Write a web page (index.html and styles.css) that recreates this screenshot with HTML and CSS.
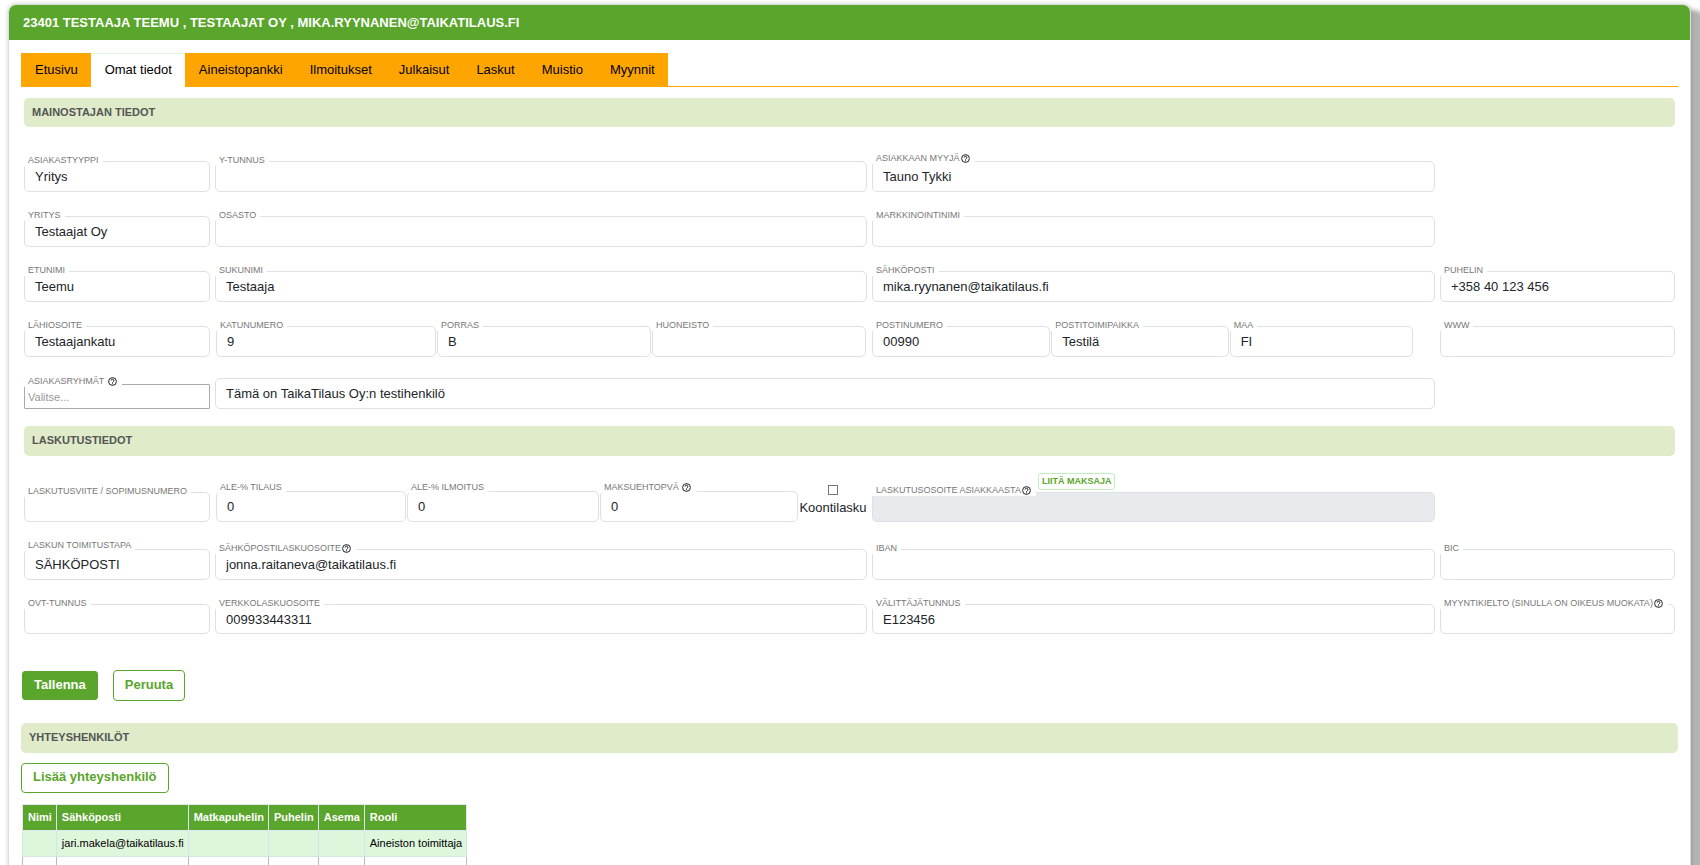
FILE: index.html
```html
<!DOCTYPE html>
<html lang="fi">
<head>
<meta charset="utf-8">
<title>Asiakkaan tiedot</title>
<link rel="stylesheet" href="styles.css">
</head>
<body>
<svg class="sprite" aria-hidden="true">
  <symbol id="help" viewBox="0 0 9 9">
    <circle cx="4.5" cy="4.5" r="3.9" fill="none" stroke="#222" stroke-width="1"/>
    <path d="M3.1 3.6a1.4 1.4 0 1 1 2.1 1.2q-.7.4-.7 1" fill="none" stroke="#222" stroke-width="1"/>
    <rect x="4" y="6.3" width="1" height="1" fill="#222"/>
  </symbol>
</svg>
<main class="panel">
  <h1 class="panel-title">23401 TESTAAJA TEEMU , TESTAAJAT OY , MIKA.RYYNANEN@TAIKATILAUS.FI</h1>
  <div class="panel-body">
    <nav class="tabs">
      <a class="tab" href="#">Etusivu</a>
      <a class="tab tab--active" href="#">Omat tiedot</a>
      <a class="tab" href="#">Aineistopankki</a>
      <a class="tab" href="#">Ilmoitukset</a>
      <a class="tab" href="#">Julkaisut</a>
      <a class="tab" href="#">Laskut</a>
      <a class="tab" href="#">Muistio</a>
      <a class="tab" href="#">Myynnit</a>
    </nav>

    <form class="form">
      <h2 class="section-title">MAINOSTAJAN TIEDOT</h2>
      <div class="rows">
        <div class="row">
          <div class="field"><select class="control" id="tyyppi"><option>Yritys</option></select><label class="label" for="tyyppi">ASIAKASTYYPPI</label></div>
          <div class="field"><input class="control" id="ytunnus"><label class="label" for="ytunnus">Y-TUNNUS</label></div>
          <div class="field"><input class="control" id="myyja" value="Tauno Tykki"><label class="label label--help" for="myyja">ASIAKKAAN MYYJÄ<svg class="help"><use href="#help"/></svg></label></div>
        </div>
        <div class="row">
          <div class="field"><input class="control" id="yritys" value="Testaajat Oy"><label class="label" for="yritys">YRITYS</label></div>
          <div class="field"><input class="control" id="osasto"><label class="label" for="osasto">OSASTO</label></div>
          <div class="field"><input class="control" id="mnimi"><label class="label" for="mnimi">MARKKINOINTINIMI</label></div>
        </div>
        <div class="row">
          <div class="field"><input class="control" id="etunimi" value="Teemu"><label class="label" for="etunimi">ETUNIMI</label></div>
          <div class="field"><input class="control" id="sukunimi" value="Testaaja"><label class="label" for="sukunimi">SUKUNIMI</label></div>
          <div class="field"><input class="control" id="email" value="mika.ryynanen@taikatilaus.fi"><label class="label" for="email">SÄHKÖPOSTI</label></div>
          <div class="field"><input class="control" id="puhelin" value="+358 40 123 456"><label class="label" for="puhelin">PUHELIN</label></div>
        </div>
        <div class="row">
          <div class="field"><input class="control" id="osoite" value="Testaajankatu"><label class="label" for="osoite">LÄHIOSOITE</label></div>
          <div class="subrow subrow--street">
            <div class="field"><input class="control" id="katunro" value="9"><label class="label" for="katunro">KATUNUMERO</label></div>
            <div class="field"><input class="control" id="porras" value="B"><label class="label" for="porras">PORRAS</label></div>
            <div class="field"><input class="control" id="huoneisto"><label class="label" for="huoneisto">HUONEISTO</label></div>
          </div>
          <div class="subrow subrow--post">
            <div class="field"><input class="control" id="postinro" value="00990"><label class="label" for="postinro">POSTINUMERO</label></div>
            <div class="field"><input class="control" id="ptp" value="Testilä"><label class="label" for="ptp">POSTITOIMIPAIKKA</label></div>
            <div class="field"><input class="control" id="maa" value="FI"><label class="label" for="maa">MAA</label></div>
          </div>
          <div class="field"><input class="control" id="www"><label class="label" for="www">WWW</label></div>
        </div>
        <div class="row row--note">
          <div class="field"><input class="control control--group" id="ryhmat" placeholder="Valitse..."><label class="label label--help" for="ryhmat">ASIAKASRYHMÄT <svg class="help"><use href="#help"/></svg></label></div>
          <div class="field field--wide"><input class="control" aria-label="Lisätiedot" value="Tämä on TaikaTilaus Oy:n testihenkilö"></div>
        </div>
      </div>

      <h2 class="section-title section-title--next">LASKUTUSTIEDOT</h2>
      <div class="rows rows--billing">
        <div class="row">
          <div class="field"><input class="control control--short" id="viite"><label class="label" for="viite">LASKUTUSVIITE / SOPIMUSNUMERO</label></div>
          <div class="subrow subrow--terms">
            <div class="field"><input class="control" id="aletilaus" value="0"><label class="label label--high" for="aletilaus">ALE-% TILAUS</label></div>
            <div class="field"><input class="control" id="aleilm" value="0"><label class="label label--high" for="aleilm">ALE-% ILMOITUS</label></div>
            <div class="field"><input class="control" id="maksuehto" value="0"><label class="label label--high" for="maksuehto">MAKSUEHTOPVÄ <svg class="help"><use href="#help"/></svg></label></div>
            <div class="check"><input class="checkbox" type="checkbox" id="koonti"><label for="koonti">Koontilasku</label></div>
          </div>
          <div class="field"><input class="control control--short" id="laskuosoite" disabled><div class="label-line"><label class="label-inline" for="laskuosoite">LASKUTUSOSOITE ASIAKKAASTA<svg class="help"><use href="#help"/></svg></label><button class="mini-button" type="button">LIITÄ MAKSAJA</button></div></div>
        </div>
        <div class="row">
          <div class="field"><select class="control" id="tapa"><option>SÄHKÖPOSTI</option></select><label class="label label--high" for="tapa">LASKUN TOIMITUSTAPA</label></div>
          <div class="field"><input class="control" id="slasku" value="jonna.raitaneva@taikatilaus.fi"><label class="label" for="slasku">SÄHKÖPOSTILASKUOSOITE<svg class="help"><use href="#help"/></svg></label></div>
          <div class="field"><input class="control" id="iban"><label class="label" for="iban">IBAN</label></div>
          <div class="field"><input class="control" id="bic"><label class="label" for="bic">BIC</label></div>
        </div>
        <div class="row row--last">
          <div class="field"><input class="control control--short" id="ovt"><label class="label" for="ovt">OVT-TUNNUS</label></div>
          <div class="field"><input class="control control--short" id="verkko" value="009933443311"><label class="label" for="verkko">VERKKOLASKUOSOITE</label></div>
          <div class="field"><input class="control control--short" id="valittaja" value="E123456"><label class="label" for="valittaja">VÄLITTÄJÄTUNNUS</label></div>
          <div class="field"><input class="control control--short" id="kielto"><label class="label" for="kielto">MYYNTIKIELTO (SINULLA ON OIKEUS MUOKATA)<svg class="help"><use href="#help"/></svg></label></div>
        </div>
      </div>
    </form>

    <div class="actions">
      <button class="button button--primary" type="button">Tallenna</button>
      <button class="button" type="button">Peruuta</button>
    </div>

    <section>
      <h2 class="section-title section-title--contacts">YHTEYSHENKILÖT</h2>
      <button class="button button--add" type="button">Lisää yhteyshenkilö</button>
      <table class="contacts">
        <thead><tr><th>Nimi</th><th>Sähköposti</th><th>Matkapuhelin</th><th>Puhelin</th><th>Asema</th><th>Rooli</th></tr></thead>
        <tbody>
          <tr class="filled"><td></td><td>jari.makela@taikatilaus.fi</td><td></td><td></td><td></td><td>Aineiston toimittaja</td></tr>
          <tr><td></td><td></td><td></td><td></td><td></td><td></td></tr>
        </tbody>
      </table>
    </section>
  </div>
</main>
</body>
</html>
```
FILE: styles.css
```css
* { box-sizing: border-box; }

body {
  margin: 0;
  height: 100vh;
  overflow: hidden;
  background: #fff;
  color: #212529;
  font: 13px/18px "Liberation Sans", Arial, sans-serif;
}

.sprite { position: absolute; width: 0; height: 0; }

.panel {
  margin: 4px 9px 0 8px;
  min-height: 100vh;
  border: 1px solid #ddd;
  border-radius: 8px;
  background: #fff;
  box-shadow: 0 0 4px rgba(0, 0, 0, .2), 12px 6px 4px #b2b2b2;
}

.panel-title {
  margin: 0;
  padding: 9px 14px 8px;
  border-radius: 7px 7px 0 0;
  background: #5aa52b;
  color: #fff;
  font-size: 13px;
  line-height: 18px;
}

.panel-body { padding: 13px 12px; }

.tabs {
  display: flex;
  border-bottom: 1px solid #ffa500;
}

.tab {
  padding: 7px 13px 8px 14px;
  border-top: 1px solid #ffa500;
  background: #ffa500;
  color: #000;
  line-height: 17px;
  text-decoration: none;
}

.tab--active {
  margin-bottom: -1px;
  border-top-color: #dff5df;
  background: #fff;
}

.form { padding: 11px 3px 0; }

.section-title {
  margin: 0;
  padding: 6px 8px;
  border-radius: 5px;
  background: #dfebc9;
  color: #555;
  font-size: 11px;
  line-height: 17px;
}

.section-title--next {
  margin-top: 17px;
  padding-bottom: 7px;
}

.section-title--contacts { padding-bottom: 7px; }

.rows {
  display: flex;
  flex-direction: column;
  gap: 24px;
  padding-top: 34px;
}

.rows--billing {
  gap: 27px;
  padding-top: 35px;
}

.row {
  display: grid;
  grid-template-columns: 186fr 652fr 563fr 235fr;
  gap: 5px;
  align-items: end;
}

.row--note,
.row--last { margin-top: -3px; }

.subrow { display: grid; }

.subrow--street {
  grid-template-columns: 220fr 214fr 214fr;
  gap: 1px;
  padding: 0 1px;
}

.subrow--post {
  grid-template-columns: 178fr 177fr 183fr;
  gap: 1px;
  padding-right: 22px;
}

.subrow--terms {
  grid-template-columns: 190fr 192fr 198fr 68px;
  gap: 1px;
  padding-left: 1px;
}

.field {
  position: relative;
  min-width: 0;
}

.field--wide { grid-column: span 2; }

.control {
  display: block;
  width: 100%;
  height: 31px;
  padding: 0 10px;
  border: 1px solid #dee0e6;
  border-radius: 5px;
  background: #fff;
  color: #212529;
  font: inherit;
  appearance: none;
}

.control--short { height: 30px; }

.control:disabled { background: #e8ebee; }

.control--group {
  height: 25px;
  padding: 0 3px;
  border-color: #aaa;
  border-radius: 1px;
  font-size: 11px;
}

.control--group::placeholder { color: #999; }

.label {
  position: absolute;
  left: 0;
  top: -7px;
  padding: 0 4px;
  background: #fff;
  color: #777;
  font-size: 9px;
  line-height: 12px;
  white-space: nowrap;
}

.label--help { top: -9px; }
.label--high { top: -10px; }

.help {
  width: 9px;
  height: 9px;
  margin: 0 1px;
  vertical-align: -2px;
}

.label-line {
  position: absolute;
  left: 0;
  bottom: 26px;
  display: flex;
  align-items: flex-end;
  gap: 2px;
}

.label-inline {
  padding: 0 4px;
  background: #fff;
  color: #777;
  font-size: 9px;
  line-height: 12px;
  white-space: nowrap;
}

.mini-button {
  height: 17px;
  margin-bottom: 6px;
  padding: 0 3px;
  border: 1px solid #c3ecc3;
  border-radius: 3px;
  background: #fff;
  color: #5aa52b;
  font: bold 9px/13px "Liberation Sans", Arial, sans-serif;
  white-space: nowrap;
}

.check {
  display: flex;
  flex-direction: column;
  align-items: center;
  height: 31px;
  margin-top: -6px;
  line-height: 18px;
}

.checkbox {
  flex: none;
  width: 10px;
  height: 10px;
  margin: 0 0 4px;
  border: 1px solid #767676;
  background: #fff;
  appearance: none;
}

.actions {
  display: flex;
  align-items: center;
  gap: 15px;
  padding: 36px 1px 22px;
}

.button {
  height: 31px;
  padding: 0 11px 2px;
  border: 1px solid #5aa52b;
  border-radius: 4px;
  background: #fff;
  color: #5aa52b;
  font: bold 13px/18px "Liberation Sans", Arial, sans-serif;
}

.button--primary {
  height: 29px;
  border-radius: 3px;
  background: #5aa52b;
  color: #fff;
}

.button--add {
  display: block;
  height: 30px;
  margin-top: 10px;
}

.contacts {
  margin: 11px 0 0 1px;
  border-collapse: collapse;
  color: #000;
  font-size: 11px;
  line-height: 16px;
}

.contacts th,
.contacts td {
  height: 26px;
  padding: 3px 4px 5px 5px;
  border: 1px solid #bbb;
  text-align: left;
}

.contacts th {
  border-color: #dde8f0;
  background: #5aa52b;
  color: #fff;
}

.contacts .filled td {
  border-color: #d5e5e5;
  background: #def6dc;
}
```
